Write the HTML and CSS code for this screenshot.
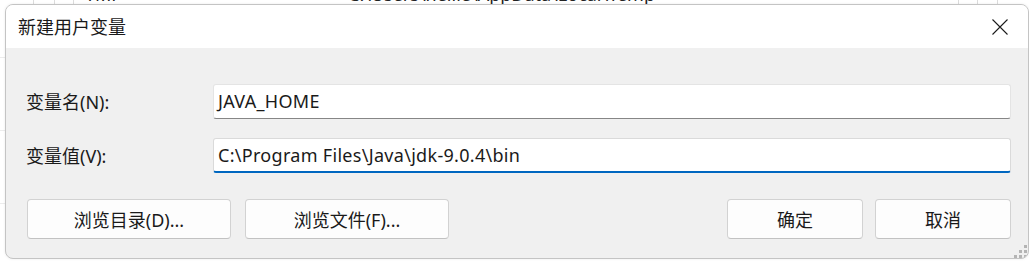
FILE: index.html
```html
<!DOCTYPE html>
<html lang="zh-CN">
<head>
    <meta charset="UTF-8">
    <title>新建用户变量</title>
    <link rel="stylesheet" href="styles.css">
</head>
<body>
    <!-- 後方的環境變數列表 -->
    <div class="backdrop">
        <div class="list-row">
            <span class="cell cell-a"></span>
            <span class="cell cell-b"></span>
            <span class="cell cell-c"></span>
            <span class="cell cell-name">TMP</span>
            <span class="cell cell-value">C:\Users\hellle\AppData\Local\Temp</span>
            <span class="cell cell-e"></span>
            <span class="cell cell-f"></span>
        </div>
    </div>

    <div class="dialog">
        <div class="titlebar">
            <span class="title">新建用户变量</span>
            <span class="close">
                <svg width="16" height="16" viewBox="0 0 16 16">
                    <path d="M0.5 0.5 L15.5 15.5 M15.5 0.5 L0.5 15.5" stroke="#1b1b1b" stroke-width="1.1" fill="none"/>
                </svg>
            </span>
        </div>
        <div class="content">
            <div class="form">
                <label class="label">变量名(N):</label>
                <div class="input">JAVA_HOME</div>
                <label class="label">变量值(V):</label>
                <div class="input focused">C:\Program Files\Java\jdk-9.0.4\bin</div>
            </div>
            <div class="buttons">
                <div class="btn-group">
                    <button class="btn btn-wide">浏览目录(D)...</button>
                    <button class="btn btn-wide">浏览文件(F)...</button>
                </div>
                <div class="btn-group right">
                    <button class="btn">确定</button>
                    <button class="btn">取消</button>
                </div>
            </div>
        </div>
        <div class="grip">
            <i style="left:10px;top:0"></i>
            <i style="left:5px;top:5px"></i>
            <i style="left:10px;top:5px"></i>
            <i style="left:0;top:10px"></i>
            <i style="left:5px;top:10px"></i>
            <i style="left:10px;top:10px"></i>
        </div>
    </div>
</body>
</html>
```

FILE: styles.css
```css
* {
    margin: 0;
    padding: 0;
    box-sizing: border-box;
}
body {
    width: 1029px;
    height: 262px;
    overflow: hidden;
    background: #fff;
    font-family: "Noto Sans", "Noto Sans CJK SC", sans-serif;
    font-size: 18px;
    color: #1a1a1a;
    position: relative;
}

/* 背景列表 */
.backdrop {
    height: 262px;
    background: repeating-linear-gradient(to bottom, #fff 0, #fff 72px, #ececec 72px, #ececec 73px);
}
.list-row {
    display: flex;
    height: 262px;
    margin-top: -15px;
}
.cell {
    border-right: 1px solid #dcdcdc;
    line-height: 18px;
    font-size: 18px;
    color: #222;
    white-space: nowrap;
    overflow: hidden;
}
.cell-a { width: 34px; }
.cell-b { width: 21px; }
.cell-c { width: 19px; }
.cell-name {
    width: 274px;
    border-right: none;
    padding-left: 11px;
}
.cell-value {
    width: 610px;
    border-right: none;
    border-left: none;
}
.cell-e { width: 20px; border-left: 1px solid #dcdcdc; }
.cell-f { width: 20px; }

/* 對話框 */
.dialog {
    position: absolute;
    left: 5px;
    top: 4px;
    width: 1024px;
    height: 255px;
    background: #f0f0f0;
    border: 1px solid #c4c4c4;
    border-radius: 8px;
    overflow: hidden;
    box-shadow: 0 0 3px rgba(0, 0, 0, 0.08);
}
.titlebar {
    height: 43px;
    background: #fff;
    display: flex;
    align-items: center;
    justify-content: space-between;
    padding: 0 20px 0 12px;
}
.title {
    font-size: 18px;
    line-height: 1;
}
.close {
    display: flex;
    margin-top: 1px;
}
.content {
    padding: 36px 17px 19px 20px;
}
.form {
    display: grid;
    grid-template-columns: 187px 798px;
    row-gap: 19px;
    align-items: center;
}
.label {
    font-size: 18px;
    line-height: 1;
}
.input {
    height: 35px;
    background: #fff;
    border: 1px solid #e4e4e4;
    border-bottom: 1px solid #868686;
    border-radius: 3px;
    padding: 0 4px 1px;
    display: flex;
    align-items: center;
    font-size: 18px;
    letter-spacing: 0.3px;
    white-space: nowrap;
}
.input.focused {
    border-color: #dadada;
    border-bottom: 2px solid #0067c0;
    padding-bottom: 0;
}
.buttons {
    display: flex;
    justify-content: space-between;
    margin-top: 26px;
    padding-left: 1px;
}
.btn-group {
    display: flex;
    gap: 14px;
}
.btn-group.right {
    gap: 12px;
}
.btn {
    width: 136px;
    height: 40px;
    background: #fdfdfd;
    border: 1px solid #d2d2d2;
    border-bottom-color: #c2c2c2;
    border-radius: 4px;
    font-family: "Noto Sans", "Noto Sans CJK SC", sans-serif;
    font-size: 18px;
    color: #1a1a1a;
}
.btn.btn-wide {
    width: 204px;
}

/* 右下角拖曳點 */
.grip {
    position: absolute;
    right: 1px;
    bottom: 0;
    width: 13px;
    height: 13px;
}
.grip i {
    position: absolute;
    width: 3px;
    height: 3px;
    background: #b4b4b4;
}
```
